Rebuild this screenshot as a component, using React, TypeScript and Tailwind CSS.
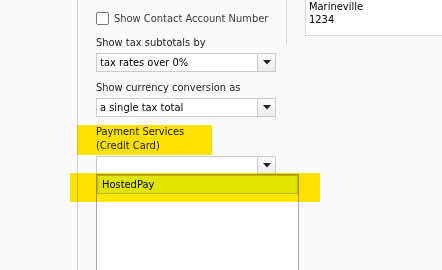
import React from 'react'

const font = { fontFamily: '"DejaVu Sans Condensed", "DejaVu Sans", sans-serif' }

const Arrow = () => (
  <svg width="8" height="5" viewBox="0 0 8 5">
    <path d="M0 0h8L4 4.5z" fill="#222" />
  </svg>
)

const Select = ({ value }: { value?: string }) => (
  <div className="flex h-[19px] w-[180px] border border-[#cbcbcb] bg-white">
    <div className="flex-1 pl-[3px] text-[11px] leading-[17px] text-black">{value}</div>
    <div className="flex w-[18px] items-center justify-center border-l border-[#cbcbcb] bg-gradient-to-b from-[#fdfdfd] to-[#ececec]">
      <Arrow />
    </div>
  </div>
)

export default function App() {
  return (
    <div
      className="relative flex h-[270px] w-[442px] overflow-hidden bg-[#fafafa] text-[11px] text-[#222]"
      style={font}
    >
      <div className="w-[78px] shrink-0 border-r border-[#d4d4d4]" />

      <div className="w-[208px] shrink-0 pl-[18px] pt-[12px]">
        <div className="flex h-[13px] items-center gap-[5px]">
          <div className="h-[13px] w-[13px] rounded-[2px] border border-[#777] bg-white" />
          <span className="leading-[13px] text-[#3a3a3a]">Show Contact Account Number</span>
        </div>

        <div className="mt-[11px] leading-[14px]">Show tax subtotals by</div>
        <div className="mt-[3px]">
          <Select value="tax rates over 0%" />
        </div>

        <div className="mt-[9px] leading-[14px]">Show currency conversion as</div>
        <div className="mt-[3px]">
          <Select value="a single tax total" />
        </div>

        <div className="mt-[8px] leading-[14px]">
          <div>Payment Services</div>
          <div>(Credit Card)</div>
        </div>
        <div className="mt-[3px]">
          <Select />
        </div>
      </div>

      <div className="h-[45px] w-[19px] shrink-0 border-l border-[#d8d8d8]" />

      <div className="h-[36px] flex-1 border-b border-l border-[#d8d8d8] bg-white pl-[3px] leading-[13px] text-black">
        <div>Marineville</div>
        <div>1234</div>
      </div>

      {/* open dropdown list */}
      <div className="absolute left-[96px] top-[174px] h-[100px] w-[203px] border border-[#a8a8a8] bg-white">
        <div className="h-[19px] border border-[#c4c400] bg-[#e0fff0] pl-[4px] leading-[17px] text-black">
          HostedPay
        </div>
      </div>

      {/* highlighter marks */}
      <div className="pointer-events-none absolute left-[77px] top-[125px] h-[30px] w-[135px] bg-[#ffe600] mix-blend-multiply" />
      <div className="pointer-events-none absolute left-[70px] top-[173px] h-[29px] w-[250px] bg-[#ffe600] mix-blend-multiply" />
    </div>
  )
}
